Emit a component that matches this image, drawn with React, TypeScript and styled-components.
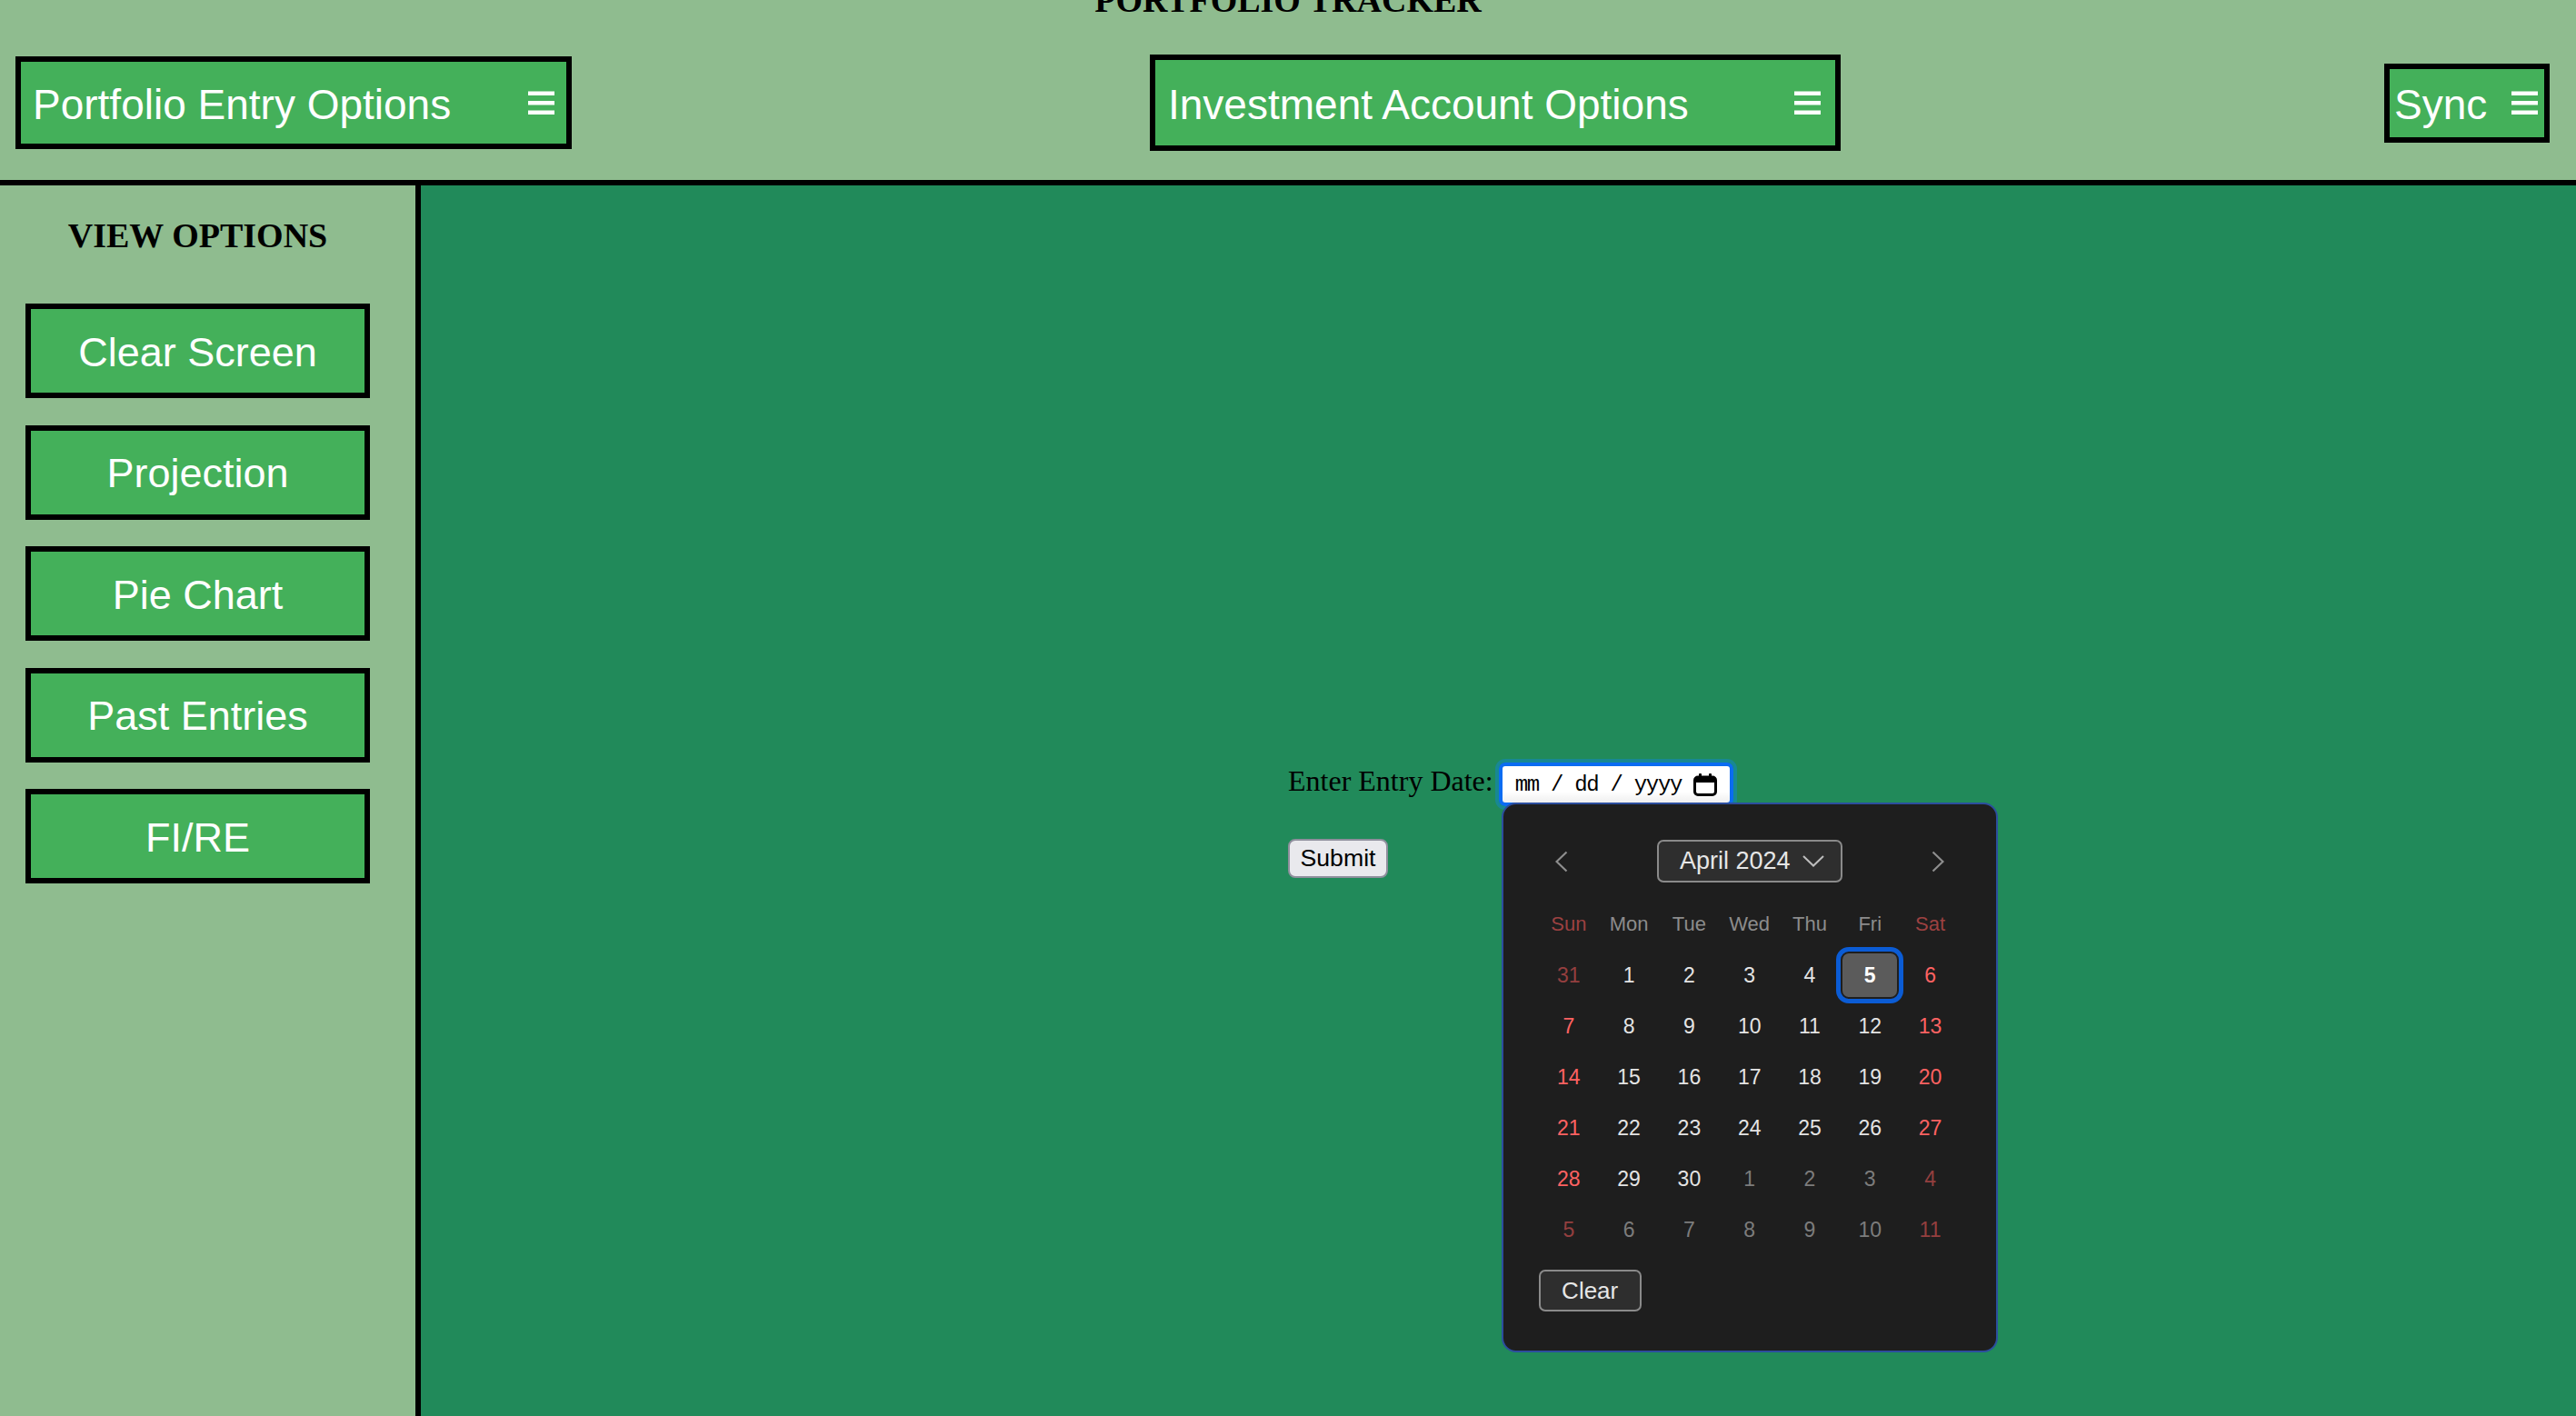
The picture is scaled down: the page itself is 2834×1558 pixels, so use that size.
import styled, { createGlobalStyle } from 'styled-components';

const GlobalStyle = createGlobalStyle`
  html, body {
    margin: 0;
    padding: 0;
    height: 100%;
    overflow: hidden;
  }
  body {
    font-family: 'Liberation Serif', 'Times New Roman', serif;
  }
  #root {
    height: 100%;
  }
`;

const Page = styled.div`
  display: flex;
  flex-direction: column;
  height: 100vh;
`;

const Header = styled.header`
  height: 204px;
  box-sizing: border-box;
  background: #8fbc8f;
  border-bottom: 6px solid #000;
  display: flex;
  flex-direction: column;
  flex-shrink: 0;
`;

const Title = styled.h3`
  margin: -22px 0 0;
  font-family: 'Liberation Serif', 'Times New Roman', serif;
  font-size: 38px;
  line-height: 44px;
  font-weight: bold;
  text-align: center;
  color: #000;
`;

const HeaderRow = styled.div`
  flex: 1;
  display: flex;
  align-items: center;
  padding: 6px 29px 0 17px;
`;

const MenuButton = styled.button<{ $w: number; $h: number; $padL: number; $padR: number; $ml?: string }>`
  width: ${(p) => p.$w}px;
  height: ${(p) => p.$h}px;
  margin-left: ${(p) => p.$ml ?? '0'};
  box-sizing: border-box;
  border: 6px solid #000;
  background: #44b05a;
  color: #fff;
  font-family: 'Liberation Sans', Arial, sans-serif;
  font-size: 46px;
  display: flex;
  align-items: center;
  justify-content: space-between;
  padding: 3px ${(p) => p.$padR}px 0 ${(p) => p.$padL}px;
  cursor: pointer;

  svg {
    margin-top: -3px;
  }
`;

const Body = styled.div`
  flex: 1;
  display: flex;
  min-height: 0;
`;

const Sidebar = styled.aside`
  width: 463px;
  box-sizing: border-box;
  background: #8fbc8f;
  border-right: 6px solid #000;
  padding: 33px 50px 0 28px;
  display: flex;
  flex-direction: column;
  gap: 29.5px;
  flex-shrink: 0;
`;

const SideHeading = styled.h3`
  margin: 0 0 23.5px;
  font-family: 'Liberation Serif', 'Times New Roman', serif;
  font-size: 38px;
  line-height: 44px;
  font-weight: bold;
  text-align: center;
  color: #000;
`;

const NavButton = styled.button`
  width: 379px;
  height: 104px;
  box-sizing: border-box;
  border: 6px solid #000;
  background: #44b05a;
  color: #fff;
  font-family: 'Liberation Sans', Arial, sans-serif;
  font-size: 45px;
  padding: 3px 0 0;
  cursor: pointer;
`;

const Main = styled.main`
  flex: 1;
  background: #218a5a;
  padding: 635px 0 0 954px;
`;

const Form = styled.form`
  display: flex;
  flex-direction: column;
  align-items: flex-start;
  gap: 36px;
`;

const DateRow = styled.div`
  display: flex;
  align-items: center;
  gap: 6px;
`;

const Label = styled.label`
  font-family: 'Liberation Serif', 'Times New Roman', serif;
  font-size: 32px;
  color: #000;
  margin-bottom: 8px;
`;

const InputWrap = styled.div`
  position: relative;
`;

const DateField = styled.div`
  width: 258px;
  height: 48px;
  box-sizing: border-box;
  border: 4px solid #0b6cf2;
  border-radius: 7px;
  box-shadow: 0 0 0 4px rgba(10, 132, 255, 0.35);
  background: linear-gradient(#ffffff 70%, #efefef);
  display: flex;
  align-items: center;
  justify-content: space-between;
  padding: 0 14px;
  font-family: 'Liberation Mono', 'Courier New', monospace;
  font-size: 24px;
  letter-spacing: -1.3px;
  color: #000;
`;

const SubmitButton = styled.button`
  width: 110px;
  height: 43px;
  box-sizing: border-box;
  background: #e9e9ed;
  border: 2px solid #8f8f9d;
  border-radius: 8px;
  font-family: 'Liberation Sans', Arial, sans-serif;
  font-size: 26.7px;
  color: #000;
  padding: 0;
`;

const Popup = styled.div`
  position: absolute;
  left: 3px;
  top: 44px;
  width: 546px;
  height: 605px;
  box-sizing: border-box;
  background: #1e1e1e;
  border: 2px solid #2c4e9e;
  border-radius: 16px;
  padding: 39px 39px 0;
  font-family: 'Liberation Sans', Arial, sans-serif;
  z-index: 2;
`;

const PopupHeader = styled.div`
  display: flex;
  align-items: center;
  justify-content: space-between;
  height: 47px;
`;

const ArrowButton = styled.button`
  width: 50px;
  height: 47px;
  display: flex;
  align-items: center;
  justify-content: center;
  background: none;
  border: none;
  padding: 0;
`;

const MonthButton = styled.button`
  width: 204px;
  height: 47px;
  box-sizing: border-box;
  background: #2e2e2e;
  border: 2px solid #8a8a8a;
  border-radius: 7px;
  color: #e6e6e6;
  font-family: 'Liberation Sans', Arial, sans-serif;
  font-size: 27px;
  display: flex;
  align-items: center;
  justify-content: center;
  gap: 14px;
  padding: 0 4px 0 10px;
`;

const Grid = styled.div`
  margin-top: 18px;
  display: grid;
  grid-template-columns: repeat(7, 1fr);
  grid-auto-rows: 56px;
  width: 464px;
`;

const WeekDay = styled.div<{ $weekend: boolean }>`
  display: flex;
  align-items: center;
  justify-content: center;
  font-size: 22px;
  color: ${(p) => (p.$weekend ? '#9c4141' : '#8c8c8c')};
`;

const DayCell = styled.div`
  display: flex;
  align-items: center;
  justify-content: center;
`;

const DayButton = styled.button<{ $color: string; $selected?: boolean }>`
  width: 60px;
  height: 48px;
  border: none;
  border-radius: 7px;
  padding: 0;
  font-family: 'Liberation Sans', Arial, sans-serif;
  font-size: 23px;
  color: ${(p) => (p.$selected ? '#ffffff' : p.$color)};
  font-weight: ${(p) => (p.$selected ? 'bold' : 'normal')};
  background: ${(p) => (p.$selected ? '#5b5b5b' : 'transparent')};
  outline: ${(p) => (p.$selected ? '5px solid #0b5cd5' : 'none')};
  outline-offset: 2px;
`;

const ClearButton = styled.button`
  margin-top: 16px;
  width: 113px;
  height: 46px;
  box-sizing: border-box;
  background: #2e2e2e;
  border: 2px solid #8a8a8a;
  border-radius: 7px;
  color: #e6e6e6;
  font-family: 'Liberation Sans', Arial, sans-serif;
  font-size: 26px;
  padding: 0;
`;

const Hamburger = () => (
  <svg width='29' height='26' viewBox='0 0 29 26'>
    <rect x='0' y='0.5' width='29' height='4.5' fill='#fff' />
    <rect x='0' y='11' width='29' height='4.5' fill='#fff' />
    <rect x='0' y='21.5' width='29' height='4.5' fill='#fff' />
  </svg>
);

const CalendarIcon = () => (
  <svg width='26' height='25' viewBox='0 0 26 25'>
    <rect x='1.5' y='4' width='23' height='19.5' rx='3.5' fill='none' stroke='#000' strokeWidth='3' />
    <rect x='1.5' y='4' width='23' height='6' rx='2' fill='#000' />
    <rect x='6' y='0' width='3' height='6' rx='1' fill='#000' />
    <rect x='17' y='0' width='3' height='6' rx='1' fill='#000' />
  </svg>
);

const Chevron = ({ dir }: { dir: 'left' | 'right' }) => (
  <svg width='14' height='24' viewBox='0 0 14 24'>
    <polyline
      points={dir === 'left' ? '12.5,1.5 1.5,12 12.5,22.5' : '1.5,1.5 12.5,12 1.5,22.5'}
      fill='none'
      stroke='#8e8e8e'
      strokeWidth='2.2'
    />
  </svg>
);

const ChevronDown = () => (
  <svg width='24' height='13' viewBox='0 0 24 13'>
    <polyline points='1,1 12,11.5 23,1' fill='none' stroke='#bdbdbd' strokeWidth='2' />
  </svg>
);

const weekDays = ['Sun', 'Mon', 'Tue', 'Wed', 'Thu', 'Fri', 'Sat'];

// April 2024 grid, with trailing/leading days of the neighbouring months
const buildDays = () => {
  const days: { n: number; current: boolean }[] = [{ n: 31, current: false }];
  for (let i = 1; i <= 30; i++) days.push({ n: i, current: true });
  for (let i = 1; i <= 11; i++) days.push({ n: i, current: false });
  return days;
};

const dayColor = (current: boolean, weekend: boolean) => {
  if (current) return weekend ? '#ff6262' : '#e4e4e4';
  return weekend ? '#943f3f' : '#7c7c7c';
};

const viewOptions = ['Clear Screen', 'Projection', 'Pie Chart', 'Past Entries', 'FI/RE'];

const App = () => {
  const days = buildDays();
  return (
    <Page>
      <GlobalStyle />
      <Header>
        <Title>PORTFOLIO TRACKER</Title>
        <HeaderRow>
          <MenuButton $w={612} $h={102} $padL={13} $padR={13}>
            Portfolio Entry Options
            <Hamburger />
          </MenuButton>
          <MenuButton $w={760} $h={106} $padL={14} $padR={16} $ml='636px'>
            Investment Account Options
            <Hamburger />
          </MenuButton>
          <MenuButton $w={182} $h={87} $padL={5} $padR={7} $ml='auto'>
            Sync
            <Hamburger />
          </MenuButton>
        </HeaderRow>
      </Header>
      <Body>
        <Sidebar>
          <SideHeading>VIEW OPTIONS</SideHeading>
          {viewOptions.map((label) => (
            <NavButton key={label}>{label}</NavButton>
          ))}
        </Sidebar>
        <Main>
          <Form onSubmit={(e) => e.preventDefault()}>
            <DateRow>
              <Label>Enter Entry Date:</Label>
              <InputWrap>
                <DateField>
                  <span>mm / dd / yyyy</span>
                  <CalendarIcon />
                </DateField>
                <Popup>
                  <PopupHeader>
                    <ArrowButton type='button'>
                      <Chevron dir='left' />
                    </ArrowButton>
                    <MonthButton type='button'>
                      April 2024
                      <ChevronDown />
                    </MonthButton>
                    <ArrowButton type='button'>
                      <Chevron dir='right' />
                    </ArrowButton>
                  </PopupHeader>
                  <Grid>
                    {weekDays.map((d, i) => (
                      <WeekDay key={d} $weekend={i === 0 || i === 6}>
                        {d}
                      </WeekDay>
                    ))}
                    {days.map((d, i) => {
                      const col = i % 7;
                      const weekend = col === 0 || col === 6;
                      return (
                        <DayCell key={i}>
                          <DayButton
                            type='button'
                            $color={dayColor(d.current, weekend)}
                            $selected={d.current && d.n === 5}
                          >
                            {d.n}
                          </DayButton>
                        </DayCell>
                      );
                    })}
                  </Grid>
                  <ClearButton type='button'>Clear</ClearButton>
                </Popup>
              </InputWrap>
            </DateRow>
            <SubmitButton type='submit'>Submit</SubmitButton>
          </Form>
        </Main>
      </Body>
    </Page>
  );
};

export default App;
